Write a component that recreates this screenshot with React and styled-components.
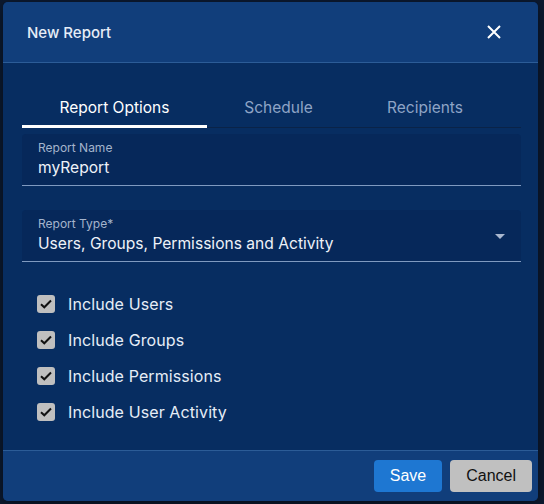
import React, { useState } from 'react';
import styled, { createGlobalStyle } from 'styled-components';

const GlobalStyle = createGlobalStyle`
  html, body {
    margin: 0;
    padding: 0;
    background: #0c1a31;
    font-family: Inter, Roboto, "Noto Sans", sans-serif;
  }
  * { box-sizing: border-box; }
`;

const Page = styled.div`
  width: 544px;
  height: 504px;
  padding: 2px 6px 3px 3px;
`;

const Dialog = styled.div`
  width: 535px;
  height: 499px;
  background: #072d61;
  border-radius: 5px;
  overflow: hidden;
  display: flex;
  flex-direction: column;
  box-shadow: 0 4px 16px rgba(0, 0, 0, 0.5);
`;

const Header = styled.div`
  height: 61px;
  flex: none;
  background: #113e7b;
  border-bottom: 1px solid #2c5c97;
  display: flex;
  align-items: center;
  justify-content: space-between;
  padding: 0 36px 0 24px;
`;

const Title = styled.h2`
  margin: 0;
  font-size: 15px;
  font-weight: 500;
  color: #e6edf7;
`;

const CloseButton = styled.button`
  background: none;
  border: none;
  padding: 0;
  width: 16px;
  height: 16px;
  display: flex;
  cursor: pointer;
`;

const Body = styled.div`
  flex: 1;
  padding: 0 17px 0 19px;
  display: flex;
  flex-direction: column;
`;

const TabBar = styled.div`
  display: grid;
  grid-template-columns: 185px 143px 150px;
  border-bottom: 1px solid #0a2348;
  margin-top: 1px;
`;

const Tab = styled.button`
  height: 64px;
  background: none;
  border: none;
  padding: 25px 0 0;
  font-family: inherit;
  font-size: 15.5px;
  font-weight: 400;
  color: ${p => (p.$active ? '#ffffff' : '#8ea4c6')};
  border-bottom: 3px solid ${p => (p.$active ? '#ffffff' : 'transparent')};
  margin-bottom: -1px;
  cursor: pointer;
`;

const Field = styled.div`
  background: #06285a;
  border-radius: 4px 4px 0 0;
  border-bottom: 1px solid #7f9ac0;
  height: 52px;
  padding: 7px 16px 0;
  position: relative;
  margin-top: ${p => p.$top}px;
`;

const Label = styled.div`
  font-size: 12px;
  color: #a4b4cc;
  line-height: 14px;
`;

const Value = styled.div`
  font-size: 15.6px;
  color: #eef2f8;
  line-height: 20px;
  margin-top: 3px;
`;

const Arrow = styled.span`
  position: absolute;
  right: 16px;
  top: 24px;
  width: 0;
  height: 0;
  border-left: 5px solid transparent;
  border-right: 5px solid transparent;
  border-top: 5px solid #a9b8cf;
`;

const Checks = styled.div`
  display: flex;
  flex-direction: column;
  gap: 18px;
  margin-top: 33px;
  padding-left: 15px;
`;

const CheckRow = styled.label`
  display: flex;
  align-items: center;
  gap: 13px;
  font-size: 16px;
  color: #e6edf7;
  cursor: pointer;
  height: 18px;
  letter-spacing: 0.1px;
`;

const Box = styled.span`
  width: 18px;
  height: 18px;
  border-radius: 3px;
  background: #bfbfbf;
  display: flex;
  align-items: center;
  justify-content: center;
`;

const Footer = styled.div`
  height: 51px;
  flex: none;
  background: #113e7b;
  border-top: 1px solid #2c5c97;
  display: flex;
  justify-content: flex-end;
  align-items: center;
  gap: 8px;
  padding: 0 6px 0 0;
`;

const Button = styled.button`
  height: 32px;
  padding: 0 ${p => p.$px}px;
  border: none;
  border-radius: 4px;
  font-family: "Liberation Sans", Arial, sans-serif;
  font-size: 16px;
  background: ${p => (p.$primary ? '#1e77d2' : '#c0c0c0')};
  color: ${p => (p.$primary ? '#ffffff' : '#111111')};
  cursor: pointer;
`;

const Check = () => (
  <svg width="12" height="10" viewBox="0 0 12 10">
    <path d="M1 5.2 L4.3 8.3 L11 1.5" fill="none" stroke="#111" strokeWidth="2" />
  </svg>
);

const tabs = ['Report Options', 'Schedule', 'Recipients'];
const options = ['Include Users', 'Include Groups', 'Include Permissions', 'Include User Activity'];

export default function App() {
  const [tab, setTab] = useState(0);
  return (
    <Page>
      <GlobalStyle />
      <Dialog>
        <Header>
          <Title>New Report</Title>
          <CloseButton aria-label="close">
            <svg width="16" height="16" viewBox="0 0 16 16">
              <path d="M2 2 L14 14 M14 2 L2 14" stroke="#ffffff" strokeWidth="2" />
            </svg>
          </CloseButton>
        </Header>
        <Body>
          <TabBar>
            {tabs.map((t, i) => (
              <Tab key={t} $active={i === tab} onClick={() => setTab(i)}>{t}</Tab>
            ))}
          </TabBar>
          <Field $top={6}>
            <Label>Report Name</Label>
            <Value>myReport</Value>
          </Field>
          <Field $top={24}>
            <Label>Report Type*</Label>
            <Value>Users, Groups, Permissions and Activity</Value>
            <Arrow />
          </Field>
          <Checks>
            {options.map(o => (
              <CheckRow key={o}>
                <Box><Check /></Box>
                {o}
              </CheckRow>
            ))}
          </Checks>
        </Body>
        <Footer>
          <Button $primary $px={16}>Save</Button>
          <Button $px={16}>Cancel</Button>
        </Footer>
      </Dialog>
    </Page>
  );
}
